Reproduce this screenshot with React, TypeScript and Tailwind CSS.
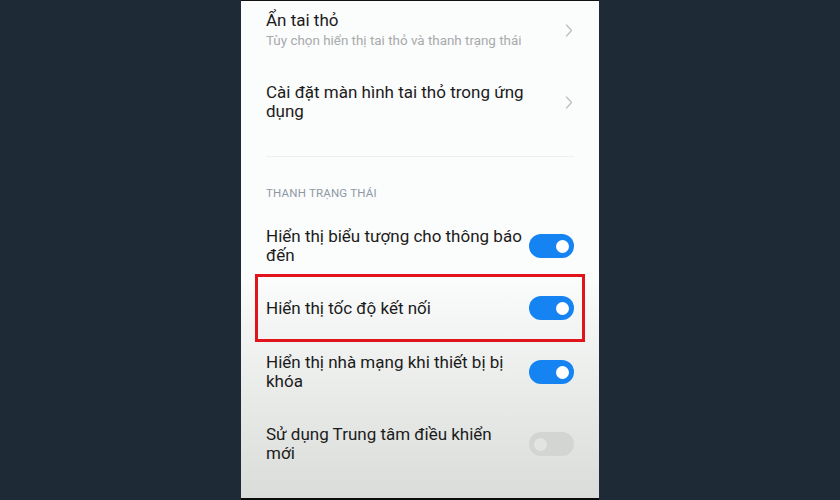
import React from 'react';

const Toggle = ({ on }: { on: boolean }) => (
  <div
    className={
      on
        ? 'w-[45px] h-[24px] rounded-full bg-[#1583f2] flex items-center justify-end pr-[5px] shrink-0'
        : 'w-[45px] h-[24px] rounded-full bg-[#d2d5d2] flex items-center justify-start pl-[5px] shrink-0'
    }
  >
    <div className={on ? 'w-[13px] h-[13px] rounded-full bg-white' : 'w-[13px] h-[13px] rounded-full bg-[#e2e4e1]'} />
  </div>
);

const Chevron = () => (
  <svg width="8" height="13" viewBox="0 0 8 13" className="shrink-0 mr-[1px]">
    <path d="M1.5 1 L6.5 6.5 L1.5 12" fill="none" stroke="#bcbfc0" strokeWidth="1.3" strokeLinecap="round" strokeLinejoin="round" />
  </svg>
);

const App = () => {
  return (
    <div className="w-[840px] h-[500px] bg-[#1e2a35] flex justify-center overflow-hidden font-['Roboto',sans-serif]">
      <div className="w-[358px] h-[500px] flex flex-col bg-linear-to-b from-[#fbfcfc] from-55% to-[#d9dcd8] border-t border-[#111] overflow-hidden">
        <div className="flex-1 min-h-0 flex flex-col px-[25px] overflow-hidden">
          {/* notch options */}
          <div className="shrink-0 flex items-center justify-between pt-[9px]">
            <div>
              <div className="text-[17px] leading-[20px] text-[#1b1b1b]">Ẩn tai thỏ</div>
              <div className="mt-[2px] text-[13.4px] leading-[18px] text-[#a7aaab]">Tùy chọn hiển thị tai thỏ và thanh trạng thái</div>
            </div>
            <Chevron />
          </div>

          <div className="shrink-0 flex items-center justify-between mt-[33px]">
            <div className="text-[17px] leading-[19px] text-[#1b1b1b] w-[270px]">Cài đặt màn hình tai thỏ trong ứng dụng</div>
            <Chevron />
          </div>

          <div className="shrink-0 mt-[35px] h-px bg-[#eef0ef]" />

          <div className="shrink-0 mt-[28px] text-[11.5px] leading-[16px] text-[#8e99a4] tracking-[0.2px]">THANH TRẠNG THÁI</div>

          {/* status bar toggles */}
          <div className="shrink-0 mt-[26px] flex items-center justify-between">
            <div className="text-[17px] leading-[19px] text-[#1b1b1b] w-[260px]">Hiển thị biểu tượng cho thông báo đến</div>
            <Toggle on />
          </div>

          <div className="shrink-0 mt-[9px] -mx-[11px] h-[68px] border-[3px] border-[#e1141c] flex items-center justify-between pl-[8px] pr-[8px]">
            <div className="text-[17px] leading-[19px] text-[#1b1b1b]">Hiển thị tốc độ kết nối</div>
            <Toggle on />
          </div>

          <div className="shrink-0 mt-[11px] flex items-center justify-between">
            <div className="text-[17px] leading-[19px] text-[#1b1b1b] w-[260px]">Hiển thị nhà mạng khi thiết bị bị khóa</div>
            <Toggle on />
          </div>

          <div className="shrink-0 mt-[34px] flex items-center justify-between">
            <div className="text-[17px] leading-[19px] text-[#1b1b1b] w-[230px]">Sử dụng Trung tâm điều khiển mới</div>
            <Toggle on={false} />
          </div>

          <div className="shrink-0 mt-[34px] flex items-center justify-between">
            <div className="text-[17px] leading-[19px] text-[#1b1b1b]">Hiển thị phần trăm pin</div>
          </div>
        </div>
        <div className="h-[2px] bg-[#0b0b0b] shrink-0" />
      </div>
    </div>
  );
};

export default App;
